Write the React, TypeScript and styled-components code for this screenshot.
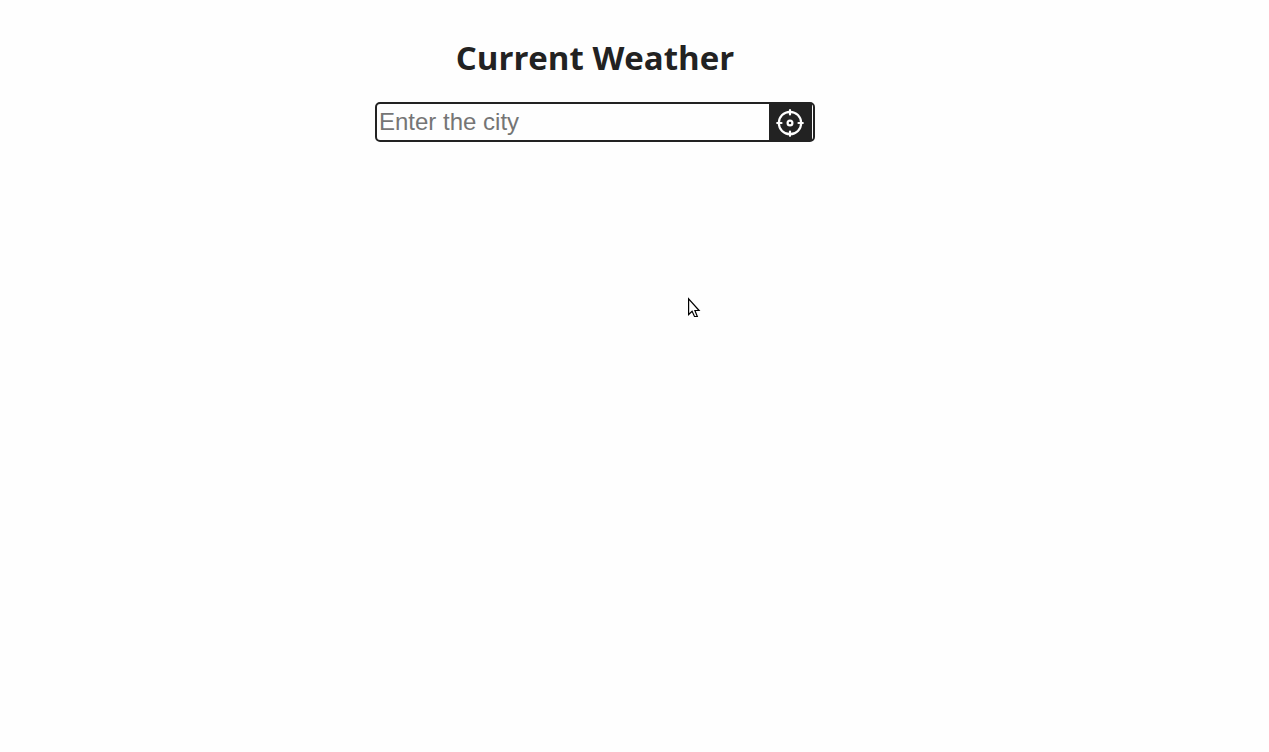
import React, { useState } from "react";
import styled, { createGlobalStyle } from "styled-components";

const GlobalStyle = createGlobalStyle`
  *, *::before, *::after {
    box-sizing: border-box;
  }

  body {
    margin: 0;
    background: #fefefe;
    color: #222;
    font-family: "Segoe UI", "Open Sans", "Noto Sans", sans-serif;
  }
`;

const Page = styled.main`
  position: relative;
  display: flex;
  flex-direction: column;
  align-items: center;
  gap: 20px;
  min-height: 100vh;
  padding: 34px 79px 34px 0;
`;

const Title = styled.h1`
  margin: 0;
  font-size: 33px;
  line-height: 48px;
  font-weight: 700;
`;

const SearchForm = styled.form`
  display: flex;
  width: 100%;
  max-width: 440px;
  height: 40px;
  padding-right: 1px;
  border: 2px solid #222;
  border-radius: 5px;
  background: #fefefe;
`;

const CityInput = styled.input`
  flex: 1;
  min-width: 0;
  padding: 0 2px;
  border: 0;
  outline: 0;
  background: transparent;
  color: #222;
  font-family: "Liberation Sans", Arial, sans-serif;
  font-size: 24px;

  &::placeholder {
    color: #757575;
    opacity: 1;
  }
`;

const LocateButton = styled.button`
  display: flex;
  align-items: center;
  justify-content: center;
  width: 43px;
  padding: 2px 1px 0 0;
  border: 0;
  background: #222;
  color: #fefefe;
  cursor: pointer;
`;

const Pointer = styled.svg`
  position: absolute;
  top: 297px;
  left: 688px;
  pointer-events: none;
`;

function CrosshairIcon() {
  return (
    <svg width="28" height="28" viewBox="0 0 28 28" fill="none" stroke="currentColor" strokeWidth="2.2" strokeLinecap="round" aria-hidden="true">
      <circle cx="14" cy="14" r="11.2" />
      <circle cx="14" cy="14" r="2.4" />
      <path d="M14 1.2v4.3M14 22.5v4.3M1.2 14h4.3M22.5 14h4.3" />
    </svg>
  );
}

export default function App() {
  const [city, setCity] = useState("");

  return (
    <>
      <GlobalStyle />
      <Page>
        <Title>Current Weather</Title>
        <SearchForm onSubmit={(event) => event.preventDefault()}>
          <CityInput
            type="text"
            aria-label="City"
            placeholder="Enter the city"
            value={city}
            onChange={(event) => setCity(event.target.value)}
          />
          <LocateButton type="button" aria-label="Use my location">
            <CrosshairIcon />
          </LocateButton>
        </SearchForm>
        <Pointer width="13" height="21" viewBox="0 0 13 21" aria-hidden="true">
          <path
            d="M.6 1.8v15.7l3.5-3.3 2.4 5.3h2.8l-2.4-6h4.2z"
            fill="#fff"
            stroke="#000"
            strokeWidth="1.2"
          />
        </Pointer>
      </Page>
    </>
  );
}
